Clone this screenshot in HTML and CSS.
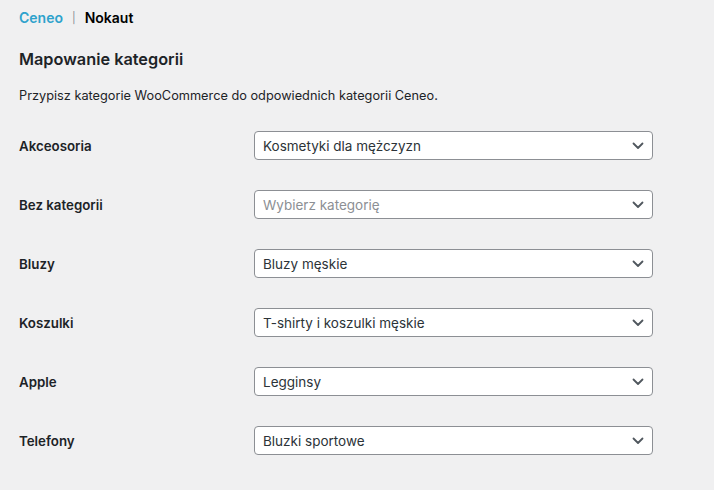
FILE: index.html
```html
<!DOCTYPE html>
<html lang="pl">
<head>
<meta charset="utf-8">
<link rel="stylesheet" href="styles.css">
</head>
<body>
<div class="wrap">
  <nav class="tabs">
    <a class="tab tab-active" href="#">Ceneo</a>
    <span class="sep">|</span>
    <a class="tab tab-current" href="#">Nokaut</a>
  </nav>
  <h2 class="title">Mapowanie kategorii</h2>
  <p class="desc">Przypisz kategorie WooCommerce do odpowiednich kategorii Ceneo.</p>
  <div class="rows">
    <div class="row">
      <div class="label">Akceosoria</div>
      <div class="select"><span class="value">Kosmetyki dla mężczyzn</span><svg class="chev" viewBox="0 0 12 8" width="12" height="8"><path d="M1.5 1.5 6 6 10.5 1.5" fill="none" stroke="#50575e" stroke-width="1.8" stroke-linecap="round" stroke-linejoin="round"/></svg></div>
    </div>
    <div class="row">
      <div class="label">Bez kategorii</div>
      <div class="select"><span class="value placeholder">Wybierz kategorię</span><svg class="chev" viewBox="0 0 12 8" width="12" height="8"><path d="M1.5 1.5 6 6 10.5 1.5" fill="none" stroke="#50575e" stroke-width="1.8" stroke-linecap="round" stroke-linejoin="round"/></svg></div>
    </div>
    <div class="row">
      <div class="label">Bluzy</div>
      <div class="select"><span class="value">Bluzy męskie</span><svg class="chev" viewBox="0 0 12 8" width="12" height="8"><path d="M1.5 1.5 6 6 10.5 1.5" fill="none" stroke="#50575e" stroke-width="1.8" stroke-linecap="round" stroke-linejoin="round"/></svg></div>
    </div>
    <div class="row">
      <div class="label">Koszulki</div>
      <div class="select"><span class="value">T-shirty i koszulki męskie</span><svg class="chev" viewBox="0 0 12 8" width="12" height="8"><path d="M1.5 1.5 6 6 10.5 1.5" fill="none" stroke="#50575e" stroke-width="1.8" stroke-linecap="round" stroke-linejoin="round"/></svg></div>
    </div>
    <div class="row">
      <div class="label">Apple</div>
      <div class="select"><span class="value">Legginsy</span><svg class="chev" viewBox="0 0 12 8" width="12" height="8"><path d="M1.5 1.5 6 6 10.5 1.5" fill="none" stroke="#50575e" stroke-width="1.8" stroke-linecap="round" stroke-linejoin="round"/></svg></div>
    </div>
    <div class="row">
      <div class="label">Telefony</div>
      <div class="select"><span class="value">Bluzki sportowe</span><svg class="chev" viewBox="0 0 12 8" width="12" height="8"><path d="M1.5 1.5 6 6 10.5 1.5" fill="none" stroke="#50575e" stroke-width="1.8" stroke-linecap="round" stroke-linejoin="round"/></svg></div>
    </div>
  </div>
</div>
</body>
</html>
```
FILE: styles.css
```css
html, body {
  margin: 0;
  padding: 0;
  background: #f0f0f1;
  height: 100%;
}
body {
  font-family: Inter, "Noto Sans", "Liberation Sans", sans-serif;
  color: #1d2327;
  font-size: 13px;
}
.wrap {
  padding: 8px 0 0 19px;
}
.tabs {
  display: flex;
  align-items: center;
  gap: 9px;
  height: 19px;
  font-size: 14px;
}
.tab {
  text-decoration: none;
  font-weight: 600;
}
.tab-active {
  color: #2ea2cc;
}
.tab-current {
  color: #000;
}
.sep {
  color: #8c8f94;
  font-size: 11px;
}
.title {
  margin: 20px 0 0;
  font-size: 16.3px;
  font-weight: 600;
  line-height: 24px;
  color: #1d2327;
}
.desc {
  margin: 15px 0 0;
  font-size: 12.75px;
  line-height: 19px;
  color: #1d2327;
}
.rows {
  margin-top: 26px;
  display: flex;
  flex-direction: column;
  gap: 30px;
}
.row {
  display: grid;
  grid-template-columns: 235px 399px;
  align-items: center;
}
.label {
  font-weight: 600;
  font-size: 13.3px;
  color: #1d2327;
}
.select {
  box-sizing: border-box;
  height: 29px;
  background: #fff;
  border: 1px solid #8c8f94;
  border-radius: 4px;
  display: flex;
  align-items: center;
  justify-content: space-between;
  padding: 0 8px 0 8px;
  font-size: 13.5px;
  color: #2c3338;
}
.placeholder {
  color: #8c8f94;
}
.chev {
  display: block;
}
```
